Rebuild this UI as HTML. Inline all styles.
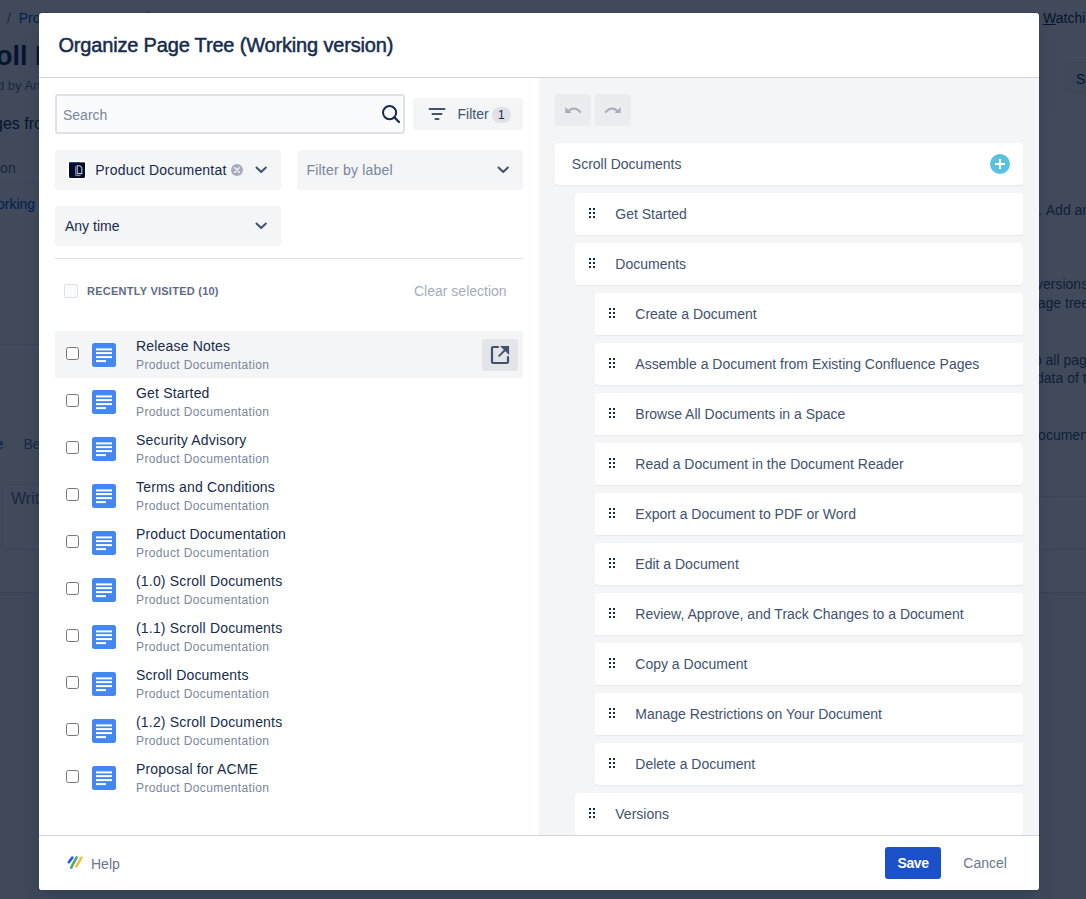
<!DOCTYPE html>
<html><head><meta charset="utf-8">
<style>
*{box-sizing:border-box;margin:0;padding:0}
html,body{width:1086px;height:899px;overflow:hidden;background:#fff;font-family:"Liberation Sans",sans-serif;color:#172b4d}
.a{position:absolute;line-height:1;white-space:nowrap}
svg.a{display:block}
#blanket{position:absolute;left:0;top:0;width:1086px;height:899px;background:rgba(1,14,37,0.752)}
#modal{position:absolute;left:39px;top:13px;width:1000px;height:877px;background:#fff;border-radius:3px;overflow:hidden;box-shadow:0 0 1px rgba(9,30,66,0.3),0 8px 16px -4px rgba(9,30,66,0.25)}
</style></head><body>

<div class="a" style="left:0;top:182px;width:40px;height:1px;background:#dfe1e6"></div>
<div class="a" style="left:0;top:344px;width:40px;height:1px;background:#dfe1e6"></div>
<div class="a" style="left:0;top:593px;width:1086px;height:306px;background:#f4f5f7"></div>
<div class="a" style="left:0;top:592px;width:1086px;height:1px;background:#dfe1e6"></div>
<div class="a" style="left:1053px;top:42px;width:1px;height:70px;background:#f4f5f7"></div>
<div class="a" style="left:1065px;top:62px;width:40px;height:32px;background:#f4f5f7;border:1px solid #ebecf0;border-radius:3px"></div>

<div class="a" style="left:2px;top:484px;width:100px;height:66px;border:1px solid #dfe1e6;border-radius:4px"></div>
<div class="a" style="left:1039px;top:496px;width:47px;height:1px;background:#dfe1e6"></div>
<div class="a" style="left:1039px;top:549px;width:47px;height:1px;background:#dfe1e6"></div>

<div class="a" style="left:7.00px;top:11.15px;font-size:14px;color:#6b778c;font-weight:normal;letter-spacing:0px;">/&nbsp; <span style="color:#0052cc">Product Documentation</span></div><div class="a" style="left:1043.00px;top:11.15px;font-size:14px;color:#172b4d;font-weight:normal;letter-spacing:0px;"><u>W</u>atching</div><div class="a" style="left:-47.50px;top:43.14px;font-size:27px;color:#172b4d;font-weight:bold;letter-spacing:0px;">Scroll Documents</div><div class="a" style="left:-42.00px;top:79.00px;font-size:13px;color:#6b778c;font-weight:normal;letter-spacing:0px;">Created by Anna</div><div class="a" style="left:-25.50px;top:116.46px;font-size:16px;color:#172b4d;font-weight:normal;letter-spacing:0px;">Pages from</div><div class="a" style="left:-31.00px;top:160.65px;font-size:14px;color:#5e6c84;font-weight:normal;letter-spacing:0px;">Version</div><div class="a" style="left:-16.00px;top:197.15px;font-size:14px;color:#0052cc;font-weight:normal;letter-spacing:0px;">Working</div><div class="a" style="left:-4.50px;top:437.15px;font-size:14px;color:#0052cc;font-weight:normal;letter-spacing:0px;">e</div><div class="a" style="left:23.40px;top:437.15px;font-size:14px;color:#6b778c;font-weight:normal;letter-spacing:0px;">Be</div><div class="a" style="left:11.00px;top:491.46px;font-size:16px;color:#6b778c;font-weight:normal;letter-spacing:0px;">Write</div><div class="a" style="left:1038.00px;top:203.15px;font-size:14px;color:#42526e;font-weight:normal;letter-spacing:0px;">.&nbsp;Add and</div><div class="a" style="left:1036.00px;top:277.15px;font-size:14px;color:#42526e;font-weight:normal;letter-spacing:0px;">versions</div><div class="a" style="left:1030.00px;top:296.15px;font-size:14px;color:#42526e;font-weight:normal;letter-spacing:0px;">page tree</div><div class="a" style="left:1030.00px;top:353.15px;font-size:14px;color:#42526e;font-weight:normal;letter-spacing:0px;">to all pag</div><div class="a" style="left:1036.00px;top:371.15px;font-size:14px;color:#42526e;font-weight:normal;letter-spacing:0px;">data of t</div><div class="a" style="left:1028.00px;top:428.15px;font-size:14px;color:#42526e;font-weight:normal;letter-spacing:0px;">Document</div><div class="a" style="left:1076.00px;top:72.15px;font-size:14px;color:#172b4d;font-weight:normal;letter-spacing:0px;">S</div>
<div id="blanket"></div>
<div id="modal">
<div class="a" style="left:0;top:64px;width:1000px;height:1px;background:#d4d4d4"></div>
<div class="a" style="left:19.40px;top:21.77px;font-size:20px;color:#172b4d;font-weight:normal;letter-spacing:-0.17px;-webkit-text-stroke:0.5px #172b4d">Organize Page Tree (Working version)</div>
<div class="a" style="left:500px;top:65px;width:500px;height:757px;background:#f4f5f7"></div>
<div class="a" style="left:16px;top:81px;width:350px;height:40px;border:2px solid #dfe1e6;background:#fafbfc;border-radius:3px"></div>
<div class="a" style="left:24.00px;top:95.15px;font-size:14px;color:#7a869a;font-weight:normal;letter-spacing:0px;">Search</div>
<svg class="a" style="left:342px;top:91px" width="20" height="20" viewBox="0 0 20 20"><circle cx="8.6" cy="8.6" r="6.6" fill="none" stroke="#172b4d" stroke-width="2"/><path d="M13.4 13.4 L18 18" stroke="#172b4d" stroke-width="2.2" stroke-linecap="round"/></svg>
<div class="a" style="left:374px;top:85px;width:110px;height:32px;background:#f4f5f7;border-radius:3px"></div>
<svg class="a" style="left:389px;top:94px" width="18" height="14" viewBox="0 0 18 14"><rect x="0.5" y="1" width="17" height="2" rx="1" fill="#42526e"/><rect x="3.5" y="6" width="11" height="2" rx="1" fill="#42526e"/><rect x="6.5" y="11" width="5" height="2" rx="1" fill="#42526e"/></svg>
<div class="a" style="left:418.50px;top:93.85px;font-size:14px;color:#42526e;font-weight:normal;letter-spacing:0px;">Filter</div>
<div class="a" style="left:453px;top:94px;width:19px;height:16px;background:#dfe1e6;border-radius:8px"></div>
<div class="a" style="left:459.00px;top:95.84px;font-size:12px;color:#172b4d;font-weight:normal;letter-spacing:0px;">1</div>
<div class="a" style="left:16px;top:137px;width:226px;height:40px;background:#f4f5f7;border-radius:3px"></div>
<svg class="a" style="left:28px;top:147px" width="20" height="20" viewBox="0 0 20 20"><rect x="0" y="0" width="20" height="20" rx="3.5" fill="#fff"/><rect x="2" y="2" width="16" height="16" rx="1.5" fill="#020c30"/><rect x="2.5" y="2" width="5" height="1" fill="#1d47a8"/><rect x="7.5" y="2" width="5" height="1" fill="#1b5e58"/><rect x="12.5" y="2" width="5" height="1" fill="#7a6a2a"/><path d="M8.7 6.2 V15.6 H13.6" fill="none" stroke="#8e97ad" stroke-width="1"/><path d="M10.2 5.8 H12.9 L14.8 7.7 V13.6 H10.2 Z" fill="none" stroke="#c1c7d0" stroke-width="1.1"/></svg>
<div class="a" style="left:56.30px;top:150.45px;font-size:14px;color:#172b4d;font-weight:normal;letter-spacing:0.2px;">Product Documentat</div>
<svg class="a" style="left:192px;top:151px" width="12" height="12" viewBox="0 0 12 12"><circle cx="6" cy="6" r="6" fill="#a5adba"/><path d="M3.8 3.8 L8.2 8.2 M8.2 3.8 L3.8 8.2" stroke="#f4f5f7" stroke-width="1.6" stroke-linecap="round"/></svg>
<svg class="a" style="left:215.5px;top:152.5px" width="13" height="9" viewBox="0 0 13 9"><path d="M1.5 1.5 L6.2 6.0 L10.9 1.5" fill="none" stroke="#42526e" stroke-width="2" stroke-linecap="round" stroke-linejoin="round"/></svg>
<div class="a" style="left:258px;top:137px;width:226px;height:40px;background:#f4f5f7;border-radius:3px"></div>
<div class="a" style="left:267.50px;top:150.45px;font-size:14px;color:#7a869a;font-weight:normal;letter-spacing:0.2px;">Filter by label</div>
<svg class="a" style="left:457.5px;top:152.5px" width="13" height="9" viewBox="0 0 13 9"><path d="M1.5 1.5 L6.2 6.0 L10.9 1.5" fill="none" stroke="#42526e" stroke-width="2" stroke-linecap="round" stroke-linejoin="round"/></svg>
<div class="a" style="left:16px;top:193px;width:226px;height:40px;background:#f4f5f7;border-radius:3px"></div>
<div class="a" style="left:26.00px;top:206.45px;font-size:14px;color:#172b4d;font-weight:normal;letter-spacing:0px;">Any time</div>
<svg class="a" style="left:215.5px;top:208.5px" width="13" height="9" viewBox="0 0 13 9"><path d="M1.5 1.5 L6.2 6.0 L10.9 1.5" fill="none" stroke="#42526e" stroke-width="2" stroke-linecap="round" stroke-linejoin="round"/></svg>
<div class="a" style="left:16px;top:245px;width:468px;height:1px;background:#dfe1e6"></div>
<div class="a" style="left:25px;top:271px;width:14px;height:14px;border:1.5px solid #dfe1e6;background:#fafbfc;border-radius:2px"></div>
<div class="a" style="left:48.00px;top:272.89px;font-size:11px;color:#5e6c84;font-weight:bold;letter-spacing:0.25px;">RECENTLY VISITED (10)</div>
<div class="a" style="left:375.00px;top:271.15px;font-size:14px;color:#a5adba;font-weight:normal;letter-spacing:0px;">Clear selection</div>
<div class="a" style="left:16px;top:318px;width:468px;height:47px;background:#f4f5f7"></div>
<div class="a" style="left:443px;top:326px;width:36px;height:32px;background:#e3e5e9;border-radius:3px"></div>
<svg class="a" style="left:451px;top:332px" width="20" height="20" viewBox="0 0 20 20"><path d="M8 2 H3 Q2 2 2 3 V17 Q2 18 3 18 H17 Q18 18 18 17 V12" fill="none" stroke="#42526e" stroke-width="2.2" stroke-linecap="round"/><path d="M9.2 10.8 L15 5" stroke="#42526e" stroke-width="1.9" stroke-linecap="round"/><path d="M10 1 H19.1 V10.1 Z" fill="#42526e"/></svg>
<div class="a" style="left:27px;top:334px;width:13px;height:13px;border:1px solid #767676;background:#fff;border-radius:2.5px"></div>
<svg class="a" style="left:53px;top:330px" width="24" height="24" viewBox="0 0 24 24"><rect x="0" y="0" width="24" height="24" rx="2.5" fill="#4387f5"/><rect x="4" y="5.4" width="16" height="2" fill="#fff"/><rect x="4" y="9.1" width="16" height="2" fill="#fff"/><rect x="4" y="13.1" width="16" height="2" fill="#fff"/><rect x="4" y="17.1" width="10" height="2" fill="#fff"/></svg>
<div class="a" style="left:97.00px;top:326.15px;font-size:14px;color:#172b4d;font-weight:normal;letter-spacing:0.18px;">Release Notes</div>
<div class="a" style="left:97.00px;top:345.84px;font-size:12px;color:#7a869a;font-weight:normal;letter-spacing:0.38px;">Product Documentation</div>
<div class="a" style="left:27px;top:381px;width:13px;height:13px;border:1px solid #767676;background:#fff;border-radius:2.5px"></div>
<svg class="a" style="left:53px;top:377px" width="24" height="24" viewBox="0 0 24 24"><rect x="0" y="0" width="24" height="24" rx="2.5" fill="#4387f5"/><rect x="4" y="5.4" width="16" height="2" fill="#fff"/><rect x="4" y="9.1" width="16" height="2" fill="#fff"/><rect x="4" y="13.1" width="16" height="2" fill="#fff"/><rect x="4" y="17.1" width="10" height="2" fill="#fff"/></svg>
<div class="a" style="left:97.00px;top:373.15px;font-size:14px;color:#172b4d;font-weight:normal;letter-spacing:0.18px;">Get Started</div>
<div class="a" style="left:97.00px;top:392.84px;font-size:12px;color:#7a869a;font-weight:normal;letter-spacing:0.38px;">Product Documentation</div>
<div class="a" style="left:27px;top:428px;width:13px;height:13px;border:1px solid #767676;background:#fff;border-radius:2.5px"></div>
<svg class="a" style="left:53px;top:424px" width="24" height="24" viewBox="0 0 24 24"><rect x="0" y="0" width="24" height="24" rx="2.5" fill="#4387f5"/><rect x="4" y="5.4" width="16" height="2" fill="#fff"/><rect x="4" y="9.1" width="16" height="2" fill="#fff"/><rect x="4" y="13.1" width="16" height="2" fill="#fff"/><rect x="4" y="17.1" width="10" height="2" fill="#fff"/></svg>
<div class="a" style="left:97.00px;top:420.15px;font-size:14px;color:#172b4d;font-weight:normal;letter-spacing:0.18px;">Security Advisory</div>
<div class="a" style="left:97.00px;top:439.84px;font-size:12px;color:#7a869a;font-weight:normal;letter-spacing:0.38px;">Product Documentation</div>
<div class="a" style="left:27px;top:475px;width:13px;height:13px;border:1px solid #767676;background:#fff;border-radius:2.5px"></div>
<svg class="a" style="left:53px;top:471px" width="24" height="24" viewBox="0 0 24 24"><rect x="0" y="0" width="24" height="24" rx="2.5" fill="#4387f5"/><rect x="4" y="5.4" width="16" height="2" fill="#fff"/><rect x="4" y="9.1" width="16" height="2" fill="#fff"/><rect x="4" y="13.1" width="16" height="2" fill="#fff"/><rect x="4" y="17.1" width="10" height="2" fill="#fff"/></svg>
<div class="a" style="left:97.00px;top:467.15px;font-size:14px;color:#172b4d;font-weight:normal;letter-spacing:0.18px;">Terms and Conditions</div>
<div class="a" style="left:97.00px;top:486.84px;font-size:12px;color:#7a869a;font-weight:normal;letter-spacing:0.38px;">Product Documentation</div>
<div class="a" style="left:27px;top:522px;width:13px;height:13px;border:1px solid #767676;background:#fff;border-radius:2.5px"></div>
<svg class="a" style="left:53px;top:518px" width="24" height="24" viewBox="0 0 24 24"><rect x="0" y="0" width="24" height="24" rx="2.5" fill="#4387f5"/><rect x="4" y="5.4" width="16" height="2" fill="#fff"/><rect x="4" y="9.1" width="16" height="2" fill="#fff"/><rect x="4" y="13.1" width="16" height="2" fill="#fff"/><rect x="4" y="17.1" width="10" height="2" fill="#fff"/></svg>
<div class="a" style="left:97.00px;top:514.15px;font-size:14px;color:#172b4d;font-weight:normal;letter-spacing:0.18px;">Product Documentation</div>
<div class="a" style="left:97.00px;top:533.84px;font-size:12px;color:#7a869a;font-weight:normal;letter-spacing:0.38px;">Product Documentation</div>
<div class="a" style="left:27px;top:569px;width:13px;height:13px;border:1px solid #767676;background:#fff;border-radius:2.5px"></div>
<svg class="a" style="left:53px;top:565px" width="24" height="24" viewBox="0 0 24 24"><rect x="0" y="0" width="24" height="24" rx="2.5" fill="#4387f5"/><rect x="4" y="5.4" width="16" height="2" fill="#fff"/><rect x="4" y="9.1" width="16" height="2" fill="#fff"/><rect x="4" y="13.1" width="16" height="2" fill="#fff"/><rect x="4" y="17.1" width="10" height="2" fill="#fff"/></svg>
<div class="a" style="left:97.00px;top:561.15px;font-size:14px;color:#172b4d;font-weight:normal;letter-spacing:0.18px;">(1.0) Scroll Documents</div>
<div class="a" style="left:97.00px;top:580.84px;font-size:12px;color:#7a869a;font-weight:normal;letter-spacing:0.38px;">Product Documentation</div>
<div class="a" style="left:27px;top:616px;width:13px;height:13px;border:1px solid #767676;background:#fff;border-radius:2.5px"></div>
<svg class="a" style="left:53px;top:612px" width="24" height="24" viewBox="0 0 24 24"><rect x="0" y="0" width="24" height="24" rx="2.5" fill="#4387f5"/><rect x="4" y="5.4" width="16" height="2" fill="#fff"/><rect x="4" y="9.1" width="16" height="2" fill="#fff"/><rect x="4" y="13.1" width="16" height="2" fill="#fff"/><rect x="4" y="17.1" width="10" height="2" fill="#fff"/></svg>
<div class="a" style="left:97.00px;top:608.15px;font-size:14px;color:#172b4d;font-weight:normal;letter-spacing:0.18px;">(1.1) Scroll Documents</div>
<div class="a" style="left:97.00px;top:627.84px;font-size:12px;color:#7a869a;font-weight:normal;letter-spacing:0.38px;">Product Documentation</div>
<div class="a" style="left:27px;top:663px;width:13px;height:13px;border:1px solid #767676;background:#fff;border-radius:2.5px"></div>
<svg class="a" style="left:53px;top:659px" width="24" height="24" viewBox="0 0 24 24"><rect x="0" y="0" width="24" height="24" rx="2.5" fill="#4387f5"/><rect x="4" y="5.4" width="16" height="2" fill="#fff"/><rect x="4" y="9.1" width="16" height="2" fill="#fff"/><rect x="4" y="13.1" width="16" height="2" fill="#fff"/><rect x="4" y="17.1" width="10" height="2" fill="#fff"/></svg>
<div class="a" style="left:97.00px;top:655.15px;font-size:14px;color:#172b4d;font-weight:normal;letter-spacing:0.18px;">Scroll Documents</div>
<div class="a" style="left:97.00px;top:674.84px;font-size:12px;color:#7a869a;font-weight:normal;letter-spacing:0.38px;">Product Documentation</div>
<div class="a" style="left:27px;top:710px;width:13px;height:13px;border:1px solid #767676;background:#fff;border-radius:2.5px"></div>
<svg class="a" style="left:53px;top:706px" width="24" height="24" viewBox="0 0 24 24"><rect x="0" y="0" width="24" height="24" rx="2.5" fill="#4387f5"/><rect x="4" y="5.4" width="16" height="2" fill="#fff"/><rect x="4" y="9.1" width="16" height="2" fill="#fff"/><rect x="4" y="13.1" width="16" height="2" fill="#fff"/><rect x="4" y="17.1" width="10" height="2" fill="#fff"/></svg>
<div class="a" style="left:97.00px;top:702.15px;font-size:14px;color:#172b4d;font-weight:normal;letter-spacing:0.18px;">(1.2) Scroll Documents</div>
<div class="a" style="left:97.00px;top:721.84px;font-size:12px;color:#7a869a;font-weight:normal;letter-spacing:0.38px;">Product Documentation</div>
<div class="a" style="left:27px;top:757px;width:13px;height:13px;border:1px solid #767676;background:#fff;border-radius:2.5px"></div>
<svg class="a" style="left:53px;top:753px" width="24" height="24" viewBox="0 0 24 24"><rect x="0" y="0" width="24" height="24" rx="2.5" fill="#4387f5"/><rect x="4" y="5.4" width="16" height="2" fill="#fff"/><rect x="4" y="9.1" width="16" height="2" fill="#fff"/><rect x="4" y="13.1" width="16" height="2" fill="#fff"/><rect x="4" y="17.1" width="10" height="2" fill="#fff"/></svg>
<div class="a" style="left:97.00px;top:749.15px;font-size:14px;color:#172b4d;font-weight:normal;letter-spacing:0.18px;">Proposal for ACME</div>
<div class="a" style="left:97.00px;top:768.84px;font-size:12px;color:#7a869a;font-weight:normal;letter-spacing:0.38px;">Product Documentation</div>
<div class="a" style="left:516px;top:81px;width:36px;height:32px;background:#ebecf0;border-radius:3px"></div>
<div class="a" style="left:556px;top:81px;width:36px;height:32px;background:#ebecf0;border-radius:3px"></div>
<svg class="a" style="left:524px;top:91px" width="20" height="12" viewBox="0 0 20 12"><path d="M4.5 8.5 Q10.5 0.5 17.8 8.6" fill="none" stroke="#a5adba" stroke-width="2"/><path d="M2.3 2.9 V9 H8.4 Z" fill="#a5adba"/></svg>
<svg class="a" style="left:564px;top:91px" width="20" height="12" viewBox="0 0 20 12"><path d="M15.5 8.5 Q9.5 0.5 2.2 8.6" fill="none" stroke="#a5adba" stroke-width="2"/><path d="M17.7 2.9 V9 H11.6 Z" fill="#a5adba"/></svg>
<div class="a" style="left:516px;top:130px;width:468px;height:42px;background:#fff;border-radius:3px;box-shadow:0 1px 1px rgba(9,30,66,0.06)"></div>
<div class="a" style="left:532.80px;top:144.15px;font-size:14px;color:#42526e;font-weight:normal;letter-spacing:0px;">Scroll Documents</div>
<svg class="a" style="left:951px;top:141px" width="20" height="20" viewBox="0 0 20 20"><circle cx="10" cy="10" r="10" fill="#57c1e0"/><path d="M10 5 V15 M5 10 H15" stroke="#fff" stroke-width="2.2"/></svg>
<div class="a" style="left:536px;top:180px;width:448px;height:42px;background:#fff;border-radius:3px;box-shadow:0 1px 1px rgba(9,30,66,0.06)"></div>
<svg class="a" style="left:550px;top:195px" width="8" height="11" viewBox="0 0 8 11"><rect x="0" y="0" width="2" height="2" fill="#172b4d"/><rect x="4" y="0" width="2" height="2" fill="#172b4d"/><rect x="0" y="4" width="2" height="2" fill="#172b4d"/><rect x="4" y="4" width="2" height="2" fill="#172b4d"/><rect x="0" y="8" width="2" height="2" fill="#172b4d"/><rect x="4" y="8" width="2" height="2" fill="#172b4d"/></svg>
<div class="a" style="left:576.30px;top:193.95px;font-size:14px;color:#42526e;font-weight:normal;letter-spacing:0px;">Get Started</div>
<div class="a" style="left:536px;top:230px;width:448px;height:42px;background:#fff;border-radius:3px;box-shadow:0 1px 1px rgba(9,30,66,0.06)"></div>
<svg class="a" style="left:550px;top:245px" width="8" height="11" viewBox="0 0 8 11"><rect x="0" y="0" width="2" height="2" fill="#172b4d"/><rect x="4" y="0" width="2" height="2" fill="#172b4d"/><rect x="0" y="4" width="2" height="2" fill="#172b4d"/><rect x="4" y="4" width="2" height="2" fill="#172b4d"/><rect x="0" y="8" width="2" height="2" fill="#172b4d"/><rect x="4" y="8" width="2" height="2" fill="#172b4d"/></svg>
<div class="a" style="left:576.30px;top:243.95px;font-size:14px;color:#42526e;font-weight:normal;letter-spacing:0px;">Documents</div>
<div class="a" style="left:556px;top:280px;width:428px;height:42px;background:#fff;border-radius:3px;box-shadow:0 1px 1px rgba(9,30,66,0.06)"></div>
<svg class="a" style="left:570px;top:295px" width="8" height="11" viewBox="0 0 8 11"><rect x="0" y="0" width="2" height="2" fill="#172b4d"/><rect x="4" y="0" width="2" height="2" fill="#172b4d"/><rect x="0" y="4" width="2" height="2" fill="#172b4d"/><rect x="4" y="4" width="2" height="2" fill="#172b4d"/><rect x="0" y="8" width="2" height="2" fill="#172b4d"/><rect x="4" y="8" width="2" height="2" fill="#172b4d"/></svg>
<div class="a" style="left:596.30px;top:293.95px;font-size:14px;color:#42526e;font-weight:normal;letter-spacing:0px;">Create a Document</div>
<div class="a" style="left:556px;top:330px;width:428px;height:42px;background:#fff;border-radius:3px;box-shadow:0 1px 1px rgba(9,30,66,0.06)"></div>
<svg class="a" style="left:570px;top:345px" width="8" height="11" viewBox="0 0 8 11"><rect x="0" y="0" width="2" height="2" fill="#172b4d"/><rect x="4" y="0" width="2" height="2" fill="#172b4d"/><rect x="0" y="4" width="2" height="2" fill="#172b4d"/><rect x="4" y="4" width="2" height="2" fill="#172b4d"/><rect x="0" y="8" width="2" height="2" fill="#172b4d"/><rect x="4" y="8" width="2" height="2" fill="#172b4d"/></svg>
<div class="a" style="left:596.30px;top:343.95px;font-size:14px;color:#42526e;font-weight:normal;letter-spacing:0px;">Assemble a Document from Existing Confluence Pages</div>
<div class="a" style="left:556px;top:380px;width:428px;height:42px;background:#fff;border-radius:3px;box-shadow:0 1px 1px rgba(9,30,66,0.06)"></div>
<svg class="a" style="left:570px;top:395px" width="8" height="11" viewBox="0 0 8 11"><rect x="0" y="0" width="2" height="2" fill="#172b4d"/><rect x="4" y="0" width="2" height="2" fill="#172b4d"/><rect x="0" y="4" width="2" height="2" fill="#172b4d"/><rect x="4" y="4" width="2" height="2" fill="#172b4d"/><rect x="0" y="8" width="2" height="2" fill="#172b4d"/><rect x="4" y="8" width="2" height="2" fill="#172b4d"/></svg>
<div class="a" style="left:596.30px;top:393.95px;font-size:14px;color:#42526e;font-weight:normal;letter-spacing:0px;">Browse All Documents in a Space</div>
<div class="a" style="left:556px;top:430px;width:428px;height:42px;background:#fff;border-radius:3px;box-shadow:0 1px 1px rgba(9,30,66,0.06)"></div>
<svg class="a" style="left:570px;top:445px" width="8" height="11" viewBox="0 0 8 11"><rect x="0" y="0" width="2" height="2" fill="#172b4d"/><rect x="4" y="0" width="2" height="2" fill="#172b4d"/><rect x="0" y="4" width="2" height="2" fill="#172b4d"/><rect x="4" y="4" width="2" height="2" fill="#172b4d"/><rect x="0" y="8" width="2" height="2" fill="#172b4d"/><rect x="4" y="8" width="2" height="2" fill="#172b4d"/></svg>
<div class="a" style="left:596.30px;top:443.95px;font-size:14px;color:#42526e;font-weight:normal;letter-spacing:0px;">Read a Document in the Document Reader</div>
<div class="a" style="left:556px;top:480px;width:428px;height:42px;background:#fff;border-radius:3px;box-shadow:0 1px 1px rgba(9,30,66,0.06)"></div>
<svg class="a" style="left:570px;top:495px" width="8" height="11" viewBox="0 0 8 11"><rect x="0" y="0" width="2" height="2" fill="#172b4d"/><rect x="4" y="0" width="2" height="2" fill="#172b4d"/><rect x="0" y="4" width="2" height="2" fill="#172b4d"/><rect x="4" y="4" width="2" height="2" fill="#172b4d"/><rect x="0" y="8" width="2" height="2" fill="#172b4d"/><rect x="4" y="8" width="2" height="2" fill="#172b4d"/></svg>
<div class="a" style="left:596.30px;top:493.95px;font-size:14px;color:#42526e;font-weight:normal;letter-spacing:0px;">Export a Document to PDF or Word</div>
<div class="a" style="left:556px;top:530px;width:428px;height:42px;background:#fff;border-radius:3px;box-shadow:0 1px 1px rgba(9,30,66,0.06)"></div>
<svg class="a" style="left:570px;top:545px" width="8" height="11" viewBox="0 0 8 11"><rect x="0" y="0" width="2" height="2" fill="#172b4d"/><rect x="4" y="0" width="2" height="2" fill="#172b4d"/><rect x="0" y="4" width="2" height="2" fill="#172b4d"/><rect x="4" y="4" width="2" height="2" fill="#172b4d"/><rect x="0" y="8" width="2" height="2" fill="#172b4d"/><rect x="4" y="8" width="2" height="2" fill="#172b4d"/></svg>
<div class="a" style="left:596.30px;top:543.95px;font-size:14px;color:#42526e;font-weight:normal;letter-spacing:0px;">Edit a Document</div>
<div class="a" style="left:556px;top:580px;width:428px;height:42px;background:#fff;border-radius:3px;box-shadow:0 1px 1px rgba(9,30,66,0.06)"></div>
<svg class="a" style="left:570px;top:595px" width="8" height="11" viewBox="0 0 8 11"><rect x="0" y="0" width="2" height="2" fill="#172b4d"/><rect x="4" y="0" width="2" height="2" fill="#172b4d"/><rect x="0" y="4" width="2" height="2" fill="#172b4d"/><rect x="4" y="4" width="2" height="2" fill="#172b4d"/><rect x="0" y="8" width="2" height="2" fill="#172b4d"/><rect x="4" y="8" width="2" height="2" fill="#172b4d"/></svg>
<div class="a" style="left:596.30px;top:593.95px;font-size:14px;color:#42526e;font-weight:normal;letter-spacing:0px;">Review, Approve, and Track Changes to a Document</div>
<div class="a" style="left:556px;top:630px;width:428px;height:42px;background:#fff;border-radius:3px;box-shadow:0 1px 1px rgba(9,30,66,0.06)"></div>
<svg class="a" style="left:570px;top:645px" width="8" height="11" viewBox="0 0 8 11"><rect x="0" y="0" width="2" height="2" fill="#172b4d"/><rect x="4" y="0" width="2" height="2" fill="#172b4d"/><rect x="0" y="4" width="2" height="2" fill="#172b4d"/><rect x="4" y="4" width="2" height="2" fill="#172b4d"/><rect x="0" y="8" width="2" height="2" fill="#172b4d"/><rect x="4" y="8" width="2" height="2" fill="#172b4d"/></svg>
<div class="a" style="left:596.30px;top:643.95px;font-size:14px;color:#42526e;font-weight:normal;letter-spacing:0px;">Copy a Document</div>
<div class="a" style="left:556px;top:680px;width:428px;height:42px;background:#fff;border-radius:3px;box-shadow:0 1px 1px rgba(9,30,66,0.06)"></div>
<svg class="a" style="left:570px;top:695px" width="8" height="11" viewBox="0 0 8 11"><rect x="0" y="0" width="2" height="2" fill="#172b4d"/><rect x="4" y="0" width="2" height="2" fill="#172b4d"/><rect x="0" y="4" width="2" height="2" fill="#172b4d"/><rect x="4" y="4" width="2" height="2" fill="#172b4d"/><rect x="0" y="8" width="2" height="2" fill="#172b4d"/><rect x="4" y="8" width="2" height="2" fill="#172b4d"/></svg>
<div class="a" style="left:596.30px;top:693.95px;font-size:14px;color:#42526e;font-weight:normal;letter-spacing:0px;">Manage Restrictions on Your Document</div>
<div class="a" style="left:556px;top:730px;width:428px;height:42px;background:#fff;border-radius:3px;box-shadow:0 1px 1px rgba(9,30,66,0.06)"></div>
<svg class="a" style="left:570px;top:745px" width="8" height="11" viewBox="0 0 8 11"><rect x="0" y="0" width="2" height="2" fill="#172b4d"/><rect x="4" y="0" width="2" height="2" fill="#172b4d"/><rect x="0" y="4" width="2" height="2" fill="#172b4d"/><rect x="4" y="4" width="2" height="2" fill="#172b4d"/><rect x="0" y="8" width="2" height="2" fill="#172b4d"/><rect x="4" y="8" width="2" height="2" fill="#172b4d"/></svg>
<div class="a" style="left:596.30px;top:743.95px;font-size:14px;color:#42526e;font-weight:normal;letter-spacing:0px;">Delete a Document</div>
<div class="a" style="left:536px;top:780px;width:448px;height:42px;background:#fff;border-radius:3px;box-shadow:0 1px 1px rgba(9,30,66,0.06)"></div>
<svg class="a" style="left:550px;top:795px" width="8" height="11" viewBox="0 0 8 11"><rect x="0" y="0" width="2" height="2" fill="#172b4d"/><rect x="4" y="0" width="2" height="2" fill="#172b4d"/><rect x="0" y="4" width="2" height="2" fill="#172b4d"/><rect x="4" y="4" width="2" height="2" fill="#172b4d"/><rect x="0" y="8" width="2" height="2" fill="#172b4d"/><rect x="4" y="8" width="2" height="2" fill="#172b4d"/></svg>
<div class="a" style="left:576.30px;top:793.95px;font-size:14px;color:#42526e;font-weight:normal;letter-spacing:0px;">Versions</div>
<div class="a" style="left:0px;top:822px;width:1000px;height:55px;background:#fff;border-top:1px solid #d4d4d4"></div>
<svg class="a" style="left:23px;top:837px" width="26" height="26" viewBox="0 0 26 26"><path d="M6.8 12.2 L10.3 7.6" stroke="#2555f0" stroke-width="2.6" stroke-linecap="round"/><path d="M9.2 17.6 L14.6 7.4" stroke="#4aaa78" stroke-width="2.6" stroke-linecap="round"/><path d="M14.4 16.3 L19.5 7.6" stroke="#f0bf40" stroke-width="2.6" stroke-linecap="round"/></svg>
<div class="a" style="left:52.00px;top:843.75px;font-size:14px;color:#6b778c;font-weight:normal;letter-spacing:0px;">Help</div>
<div class="a" style="left:846px;top:834px;width:56px;height:32px;background:#1a51c8;border-radius:3px"></div>
<div class="a" style="left:858.50px;top:843.15px;font-size:14px;color:#fff;font-weight:bold;letter-spacing:-0.4px;">Save</div>
<div class="a" style="left:924.30px;top:843.15px;font-size:14px;color:#6b778c;font-weight:normal;letter-spacing:0px;">Cancel</div>
</div>
</body></html>
